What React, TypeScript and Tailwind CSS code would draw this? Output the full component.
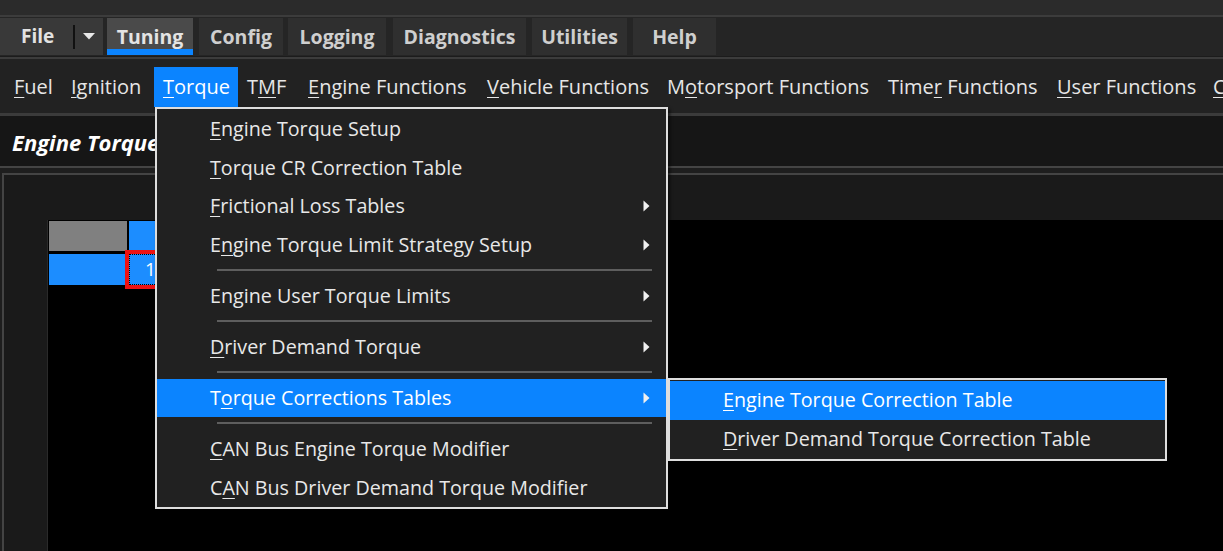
import React from 'react';

type Entry = { t: string; u?: number; sub?: boolean; hi?: boolean } | 'sep';

const tabs = [
  { label: 'Tuning', cls: 'ml-[4px] w-[86px] bg-[#4a4a4a] text-[#e4e4e4]', active: true },
  { label: 'Config', cls: 'ml-[6px] w-[84px] bg-[#2f2f2f] text-[#cfcfcf]' },
  { label: 'Logging', cls: 'ml-[5px] w-[98px] bg-[#2f2f2f] text-[#cfcfcf]' },
  { label: 'Diagnostics', cls: 'ml-[7px] w-[133px] bg-[#2f2f2f] text-[#cfcfcf]' },
  { label: 'Utilities', cls: 'ml-[6px] w-[95px] bg-[#2f2f2f] text-[#cfcfcf]' },
  { label: 'Help', cls: 'ml-[6px] w-[83px] bg-[#2f2f2f] text-[#cfcfcf]' },
];

const menus = [
  { t: 'Fuel', u: 0, cls: 'w-[57px] pl-[10px]' },
  { t: 'Ignition', u: 0, cls: 'w-[93px] pl-[10px]' },
  { t: 'Torque', u: 0, cls: 'w-[84px] pl-[9px] bg-[#0b84ff] text-white' },
  { t: 'TMF', u: 1, cls: 'w-[60px] pl-[9px]' },
  { t: 'Engine Functions', u: 0, cls: 'w-[179px] pl-[10px]' },
  { t: 'Vehicle Functions', u: 0, cls: 'w-[180px] pl-[10px]' },
  { t: 'Motorsport Functions', u: 1, cls: 'w-[221px] pl-[10px]' },
  { t: 'Timer Functions', u: 4, cls: 'w-[169px] pl-[10px]' },
  { t: 'User Functions', u: 0, cls: 'w-[156px] pl-[10px]' },
  { t: 'Custom Functions', u: 0, cls: 'w-[180px] pl-[10px]' },
];

const torqueMenu: Entry[] = [
  { t: 'Engine Torque Setup', u: 0 },
  { t: 'Torque CR Correction Table', u: 0 },
  { t: 'Frictional Loss Tables', u: 0, sub: true },
  { t: 'Engine Torque Limit Strategy Setup', u: 1, sub: true },
  'sep',
  { t: 'Engine User Torque Limits', sub: true },
  'sep',
  { t: 'Driver Demand Torque', u: 0, sub: true },
  'sep',
  { t: 'Torque Corrections Tables', u: 1, sub: true, hi: true },
  'sep',
  { t: 'CAN Bus Engine Torque Modifier', u: 0 },
  { t: 'CAN Bus Driver Demand Torque Modifier', u: 1 },
];

// label with its mnemonic letter underlined, kept in one span so spaces survive flex
function Mn({ t, u }: { t: string; u?: number }) {
  if (u === undefined) return <span>{t}</span>;
  return (
    <span>
      {t.slice(0, u)}
      <span className="underline decoration-1 underline-offset-[3px]">{t[u]}</span>
      {t.slice(u + 1)}
    </span>
  );
}

function Arrow() {
  return (
    <svg width="7" height="12" viewBox="0 0 7 12" className="ml-auto mr-[16px] shrink-0">
      <polygon points="0.5,0.5 6.5,6 0.5,11.5" fill="#f0f0f0" />
    </svg>
  );
}

export default function App() {
  return (
    <div className="relative w-[1223px] h-[551px] overflow-hidden bg-black font-['Open_Sans','Noto_Sans',sans-serif] select-none">
      <div className="h-[15px] bg-[#2b2b2b]" />
      <div className="h-[2px] bg-[#3c3c3c]" />

      {/* ribbon tabs */}
      <div className="h-[39px] bg-[#252525] flex pt-[1px]">
        <div className="w-[103px] h-[37px] bg-[#393939] flex items-center">
          <span className="ml-[21px] text-[19px] font-bold text-[#e2e2e2]">File</span>
          <div className="ml-auto w-[2px] h-[24px] bg-[#111]" />
          <svg width="12" height="7" viewBox="0 0 12 7" className="mx-[8px]">
            <polygon points="0,0 12,0 6,6.5" fill="#e8e8e8" />
          </svg>
        </div>
        {tabs.map((tab) => (
          <div
            key={tab.label}
            className={`relative h-[37px] flex items-center justify-center text-[19.5px] font-bold ${tab.cls}`}
          >
            {tab.label}
            {tab.active && <div className="absolute left-0 right-0 bottom-0 h-[6px] bg-[#0b84ff]" />}
          </div>
        ))}
      </div>
      <div className="h-[1px] bg-[#1c1c1c]" />
      <div className="h-[2px] bg-[#3c3c3c]" />

      {/* menu bar */}
      <div className="h-[54px] bg-[#222222] flex pl-[4px] pt-[8px] whitespace-nowrap">
        {menus.map((m) => (
          <div key={m.t} className={`h-[40px] shrink-0 flex items-center text-[20px] text-[#e6e6e6] ${m.cls}`}>
            <Mn t={m.t} u={m.u} />
          </div>
        ))}
      </div>
      <div className="h-[3px] bg-[#3b3b3b]" />

      {/* title */}
      <div className="h-[50px] bg-[#161616] flex items-center pl-[12px] pt-[3px]">
        <span className="text-[22px] font-bold italic text-white whitespace-nowrap">Engine Torque Correction Table</span>
      </div>
      <div className="h-[2px] bg-[#444444]" />
      <div className="h-[5px] bg-[#1e1e1e]" />

      {/* content */}
      <div className="flex h-[378px]">
        <div className="w-[2px] bg-[#1e1e1e]" />
        <div className="flex-1 flex flex-col border-l-2 border-t-2 border-[#444444] bg-[#1a1a1a]">
          <div className="h-[45px]" />
          <div className="flex flex-1">
            <div className="w-[44px] border-r border-[#2a2a2a]" />
            <div className="flex-1 bg-black pl-[1px] pt-[1px]">
              <div className="flex gap-[2px]">
                <div className="w-[78px] h-[30px] bg-[#808080]" />
                <div className="w-[80px] h-[30px] bg-[#1c8dff]" />
              </div>
              <div className="flex items-start mt-[3px]">
                <div className="w-[76px] h-[31px] bg-[#1c8dff]" />
                <div className="-mt-[4px] w-[82px] h-[39px] border-4 border-[#ee1111] bg-[#1c8dff]">
                  <div className="h-full border border-dotted border-black flex items-center pl-[15px] text-[19px] text-white">
                    100
                  </div>
                </div>
              </div>
            </div>
          </div>
        </div>
      </div>

      {/* Torque dropdown */}
      <div className="absolute left-[155px] top-[107px] w-[513px] h-[402px] border-2 border-[#dedede] bg-[#212121] pt-[0.6px] shadow-[2px_2px_3px_rgba(0,0,0,0.6)]">
        {torqueMenu.map((e, i) =>
          e === 'sep' ? (
            <div key={i} className="h-[12.33px] flex items-center pl-[60px] pr-[14px]">
              <div className="h-[2px] w-full bg-[#5e5e5e]" />
            </div>
          ) : (
            <div
              key={i}
              className={`h-[38.67px] flex items-center pl-[53px] text-[19.7px] whitespace-nowrap ${
                e.hi ? 'bg-[#0b84ff] text-white' : 'text-[#e8e8e8]'
              }`}
            >
              <Mn t={e.t} u={e.u} />
              {e.sub && <Arrow />}
            </div>
          ),
        )}
      </div>

      {/* submenu */}
      <div className="absolute left-[668px] top-[378px] w-[499px] h-[83px] border-2 border-[#dedede] bg-[#212121] pt-[1px]">
        <div className="h-[38.5px] flex items-center pl-[53px] text-[19.7px] bg-[#0b84ff] text-white whitespace-nowrap">
          <Mn t="Engine Torque Correction Table" u={0} />
        </div>
        <div className="h-[38.5px] flex items-center pl-[53px] text-[19.7px] text-[#e8e8e8] whitespace-nowrap">
          <Mn t="Driver Demand Torque Correction Table" u={0} />
        </div>
      </div>
    </div>
  );
}
